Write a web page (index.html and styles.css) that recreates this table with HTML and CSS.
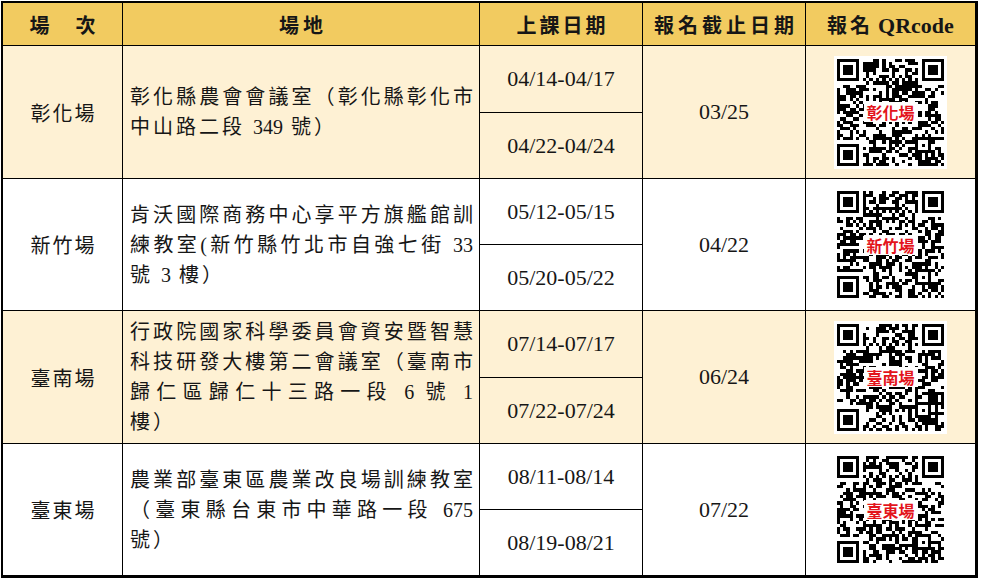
FILE: index.html
```html
<!DOCTYPE html>
<html lang="zh-Hant">
<head>
<meta charset="utf-8">
<title>場次</title>
<link rel="stylesheet" href="styles.css">
</head>
<body>
<div class="sheet">
  <div class="hd hd-venue">場　次</div>
  <div class="hd hd-place">場地</div>
  <div class="hd hd-date">上課日期</div>
  <div class="hd hd-dead">報名截止日期</div>
  <div class="hd hd-qr"><span class="hd-qr-text"><span class="hd-qr-cjk">報名</span> <span class="lat">QRcode</span></span></div>

  <div class="cell venue cream span">彰化場</div>
  <div class="cell addr cream span"><div class="lines"><span class="ln">彰化縣農會會議室（彰化縣彰化市</span><span class="ln last">中山路二段 <span class="num">349</span> 號）</span></div></div>
  <div class="cell date cream">04/14-04/17</div>
  <div class="cell dead cream span">03/25</div>
  <div class="cell qrcell cream span"><div class="qr" data-seed="11"><span class="qr-label">彰化場</span></div></div>
  <div class="cell date cream">04/22-04/24</div>

  <div class="cell venue span">新竹場</div>
  <div class="cell addr span"><div class="lines"><span class="ln">肯沃國際商務中心享平方旗艦館訓</span><span class="ln">練教室(新竹縣竹北市自強七街 <span class="num end">33</span></span><span class="ln last">號 <span class="num">3</span> 樓）</span></div></div>
  <div class="cell date">05/12-05/15</div>
  <div class="cell dead span">04/22</div>
  <div class="cell qrcell span"><div class="qr" data-seed="23"><span class="qr-label">新竹場</span></div></div>
  <div class="cell date">05/20-05/22</div>

  <div class="cell venue cream span">臺南場</div>
  <div class="cell addr cream span"><div class="lines"><span class="ln">行政院國家科學委員會資安暨智慧</span><span class="ln">科技研發大樓第二會議室（臺南市</span><span class="ln">歸仁區歸仁十三路一段 <span class="num">6</span> 號 <span class="num end">1</span></span><span class="ln last">樓）</span></div></div>
  <div class="cell date cream">07/14-07/17</div>
  <div class="cell dead cream span">06/24</div>
  <div class="cell qrcell cream span"><div class="qr" data-seed="37"><span class="qr-label">臺南場</span></div></div>
  <div class="cell date cream">07/22-07/24</div>

  <div class="cell venue span">臺東場</div>
  <div class="cell addr span"><div class="lines"><span class="ln">農業部臺東區農業改良場訓練教室</span><span class="ln">（臺東縣台東市中華路一段 <span class="num end">675</span></span><span class="ln last">號）</span></div></div>
  <div class="cell date">08/11-08/14</div>
  <div class="cell dead span">07/22</div>
  <div class="cell qrcell span"><div class="qr" data-seed="53"><span class="qr-label">臺東場</span></div></div>
  <div class="cell date">08/19-08/21</div>
</div>
<script src="script.js"></script>
</body>
</html>
```

FILE: styles.css
```css
html, body {
  margin: 0;
  padding: 0;
  background: #fff;
}

body {
  font-family: "Liberation Serif", "Noto Sans CJK TC", serif;
  color: #161616;
}

.sheet {
  display: inline-grid;
  grid-template-columns: 119px 356px 162px 162px 169px;
  grid-template-rows: 42px 66px 65px 65px 65px 66px 65px 65px 65px;
  gap: 1px;
  background: #000;
  border-style: solid;
  border-color: #000;
  border-width: 2px 3px 3px 2px;
  margin: 1px 0 0 1px;
}

.hd {
  background: #f2cb60;
  display: flex;
  align-items: center;
  justify-content: center;
  font-family: "Liberation Serif", "Noto Sans CJK TC", serif;
  font-weight: 700;
  font-size: 20px;
  color: #161616;
}

.hd-venue { letter-spacing: 3px; padding-left: 3px; }
.hd-place { letter-spacing: 4px; padding-left: 4px; }
.hd-date { letter-spacing: 3px; padding-left: 3px; }
.hd-dead { letter-spacing: 4px; padding-left: 4px; }
.hd-qr-text { white-space: pre; }
.hd-qr-cjk { letter-spacing: 3px; }
.lat { font-family: "Liberation Serif", serif; font-size: 22px; }

.cell {
  background: #fff;
  display: flex;
  align-items: center;
  justify-content: center;
}

.cream { background: #fef1d4; }

.span { grid-row: span 2; }

.venue {
  font-size: 20px;
  letter-spacing: 2px;
  padding-left: 2px;
}

.addr {
  justify-content: stretch;
  padding: 0 3px 0 7px;
  font-size: 20px;
  letter-spacing: 3px;
}

.lines {
  width: 100%;
  display: flex;
  flex-direction: column;
}

.ln {
  display: block;
  line-height: 30px;
  white-space: nowrap;
  text-align: justify;
  text-align-last: justify;
}

.ln.last {
  text-align: left;
  text-align-last: left;
}

.num {
  letter-spacing: 0;
}

.num.end {
  padding-right: 3px;
}

.date, .dead {
  font-size: 22px;
}

.qr {
  position: relative;
  width: 113px;
  height: 113px;
  background: #fff;
}

.qr svg {
  display: block;
  width: 113px;
  height: 113px;
}

.qr-label {
  position: absolute;
  left: 50%;
  top: 50%;
  transform: translate(-50%, -50%);
  background: #fff;
  color: #e3141c;
  font-family: "Noto Sans CJK TC", sans-serif;
  font-weight: 700;
  font-size: 16px;
  line-height: 20px;
  padding: 0 3px;
  white-space: nowrap;
}
```

FILE: script.js
```js
(function () {
  var N = 33;
  function rng(seed) {
    var s = (seed * 2654435761) >>> 0;
    if (s === 0) s = 1;
    return function () {
      s ^= s << 13; s >>>= 0;
      s ^= s >>> 17;
      s ^= s << 5; s >>>= 0;
      return s / 4294967296;
    };
  }
  function build(seed) {
    var r = rng(seed);
    var m = [], res = [];
    for (var y = 0; y < N; y++) {
      m.push([]); res.push([]);
      for (var x = 0; x < N; x++) { m[y].push(0); res[y].push(false); }
    }
    function finder(ox, oy) {
      for (var dy = -1; dy <= 7; dy++) {
        for (var dx = -1; dx <= 7; dx++) {
          var x = ox + dx, y = oy + dy;
          if (x < 0 || y < 0 || x >= N || y >= N) continue;
          res[y][x] = true;
          var on = dx >= 0 && dx <= 6 && dy >= 0 && dy <= 6 &&
            (dx === 0 || dx === 6 || dy === 0 || dy === 6 ||
             (dx >= 2 && dx <= 4 && dy >= 2 && dy <= 4));
          m[y][x] = on ? 1 : 0;
        }
      }
    }
    finder(0, 0); finder(N - 7, 0); finder(0, N - 7);
    for (var i = 8; i < N - 8; i++) {
      res[6][i] = true; m[6][i] = i % 2 === 0 ? 1 : 0;
      res[i][6] = true; m[i][6] = i % 2 === 0 ? 1 : 0;
    }
    var c = 26;
    for (var ay = -2; ay <= 2; ay++) {
      for (var ax = -2; ax <= 2; ax++) {
        res[c + ay][c + ax] = true;
        var ring = Math.max(Math.abs(ax), Math.abs(ay));
        m[c + ay][c + ax] = (ring === 2 || ring === 0) ? 1 : 0;
      }
    }
    for (var yy = 0; yy < N; yy++) {
      for (var xx = 0; xx < N; xx++) {
        if (!res[yy][xx]) m[yy][xx] = r() < 0.5 ? 1 : 0;
      }
    }
    var d = '';
    for (var py = 0; py < N; py++) {
      for (var px = 0; px < N; px++) {
        if (m[py][px]) d += 'M' + px + ' ' + py + 'h1v1h-1z';
      }
    }
    return '<svg xmlns="http://www.w3.org/2000/svg" viewBox="-0.8 -0.8 34.6 34.6" shape-rendering="crispEdges"><path fill="#000" d="' + d + '"/></svg>';
  }
  var qrs = document.querySelectorAll('.qr');
  for (var k = 0; k < qrs.length; k++) {
    var el = qrs[k];
    el.insertAdjacentHTML('afterbegin', build(parseInt(el.getAttribute('data-seed'), 10)));
  }
})();
```
